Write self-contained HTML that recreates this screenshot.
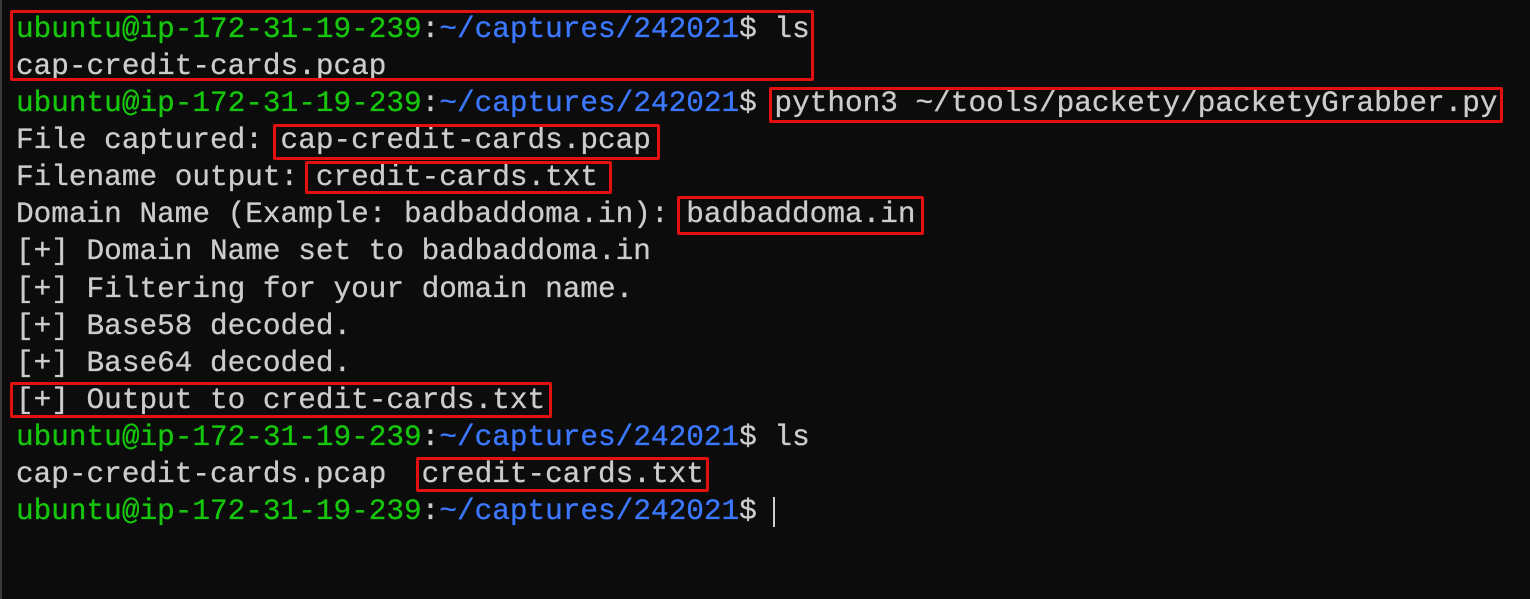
<!DOCTYPE html>
<html><head><style>
html,body{margin:0;padding:0;width:1530px;height:599px;overflow:hidden;background:#0c0c0c}
.b{position:absolute;left:0;top:0;width:1530px;height:599px;background:#0c0c0c;border-left:2px solid #3a3a3a;box-sizing:border-box}
.l{position:absolute;left:16px;font-family:"Liberation Mono","DejaVu Sans Mono",monospace;font-size:29.4px;line-height:37px;color:#cccccc;white-space:pre;-webkit-text-stroke:0.3px currentColor}
.g{color:#16c60c}.u{color:#3b78ff}
.r{position:absolute;border:3px solid #e31010;border-radius:2px;box-sizing:border-box}
.c{position:absolute;left:773px;top:497px;width:2px;height:30px;background:#cccccc}
</style></head><body><div class="b"></div>
<div class="l" style="top:11px"><span class="g">ubuntu@ip-172-31-19-239</span>:<span class="u">~/captures/242021</span>$ ls</div>
<div class="l" style="top:48px">cap-credit-cards.pcap</div>
<div class="l" style="top:85px"><span class="g">ubuntu@ip-172-31-19-239</span>:<span class="u">~/captures/242021</span>$ python3 ~/tools/packety/packetyGrabber.py</div>
<div class="l" style="top:122px">File captured: cap-credit-cards.pcap</div>
<div class="l" style="top:159px">Filename output: credit-cards.txt</div>
<div class="l" style="top:196px">Domain Name (Example: badbaddoma.in): badbaddoma.in</div>
<div class="l" style="top:233px">[+] Domain Name set to badbaddoma.in</div>
<div class="l" style="top:271px">[+] Filtering for your domain name.</div>
<div class="l" style="top:308px">[+] Base58 decoded.</div>
<div class="l" style="top:345px">[+] Base64 decoded.</div>
<div class="l" style="top:382px">[+] Output to credit-cards.txt</div>
<div class="l" style="top:419px"><span class="g">ubuntu@ip-172-31-19-239</span>:<span class="u">~/captures/242021</span>$ ls</div>
<div class="l" style="top:456px">cap-credit-cards.pcap  credit-cards.txt</div>
<div class="l" style="top:493px"><span class="g">ubuntu@ip-172-31-19-239</span>:<span class="u">~/captures/242021</span>$ </div>
<div class="c"></div>
<div class="r" style="left:10px;top:10px;width:804px;height:71px"></div>
<div class="r" style="left:769px;top:87px;width:734px;height:36px"></div>
<div class="r" style="left:273px;top:124px;width:387px;height:36px"></div>
<div class="r" style="left:305px;top:161px;width:307px;height:33px"></div>
<div class="r" style="left:677px;top:196px;width:247px;height:39px"></div>
<div class="r" style="left:10px;top:382px;width:542px;height:36px"></div>
<div class="r" style="left:416px;top:457px;width:293px;height:35px"></div>
</body></html>
